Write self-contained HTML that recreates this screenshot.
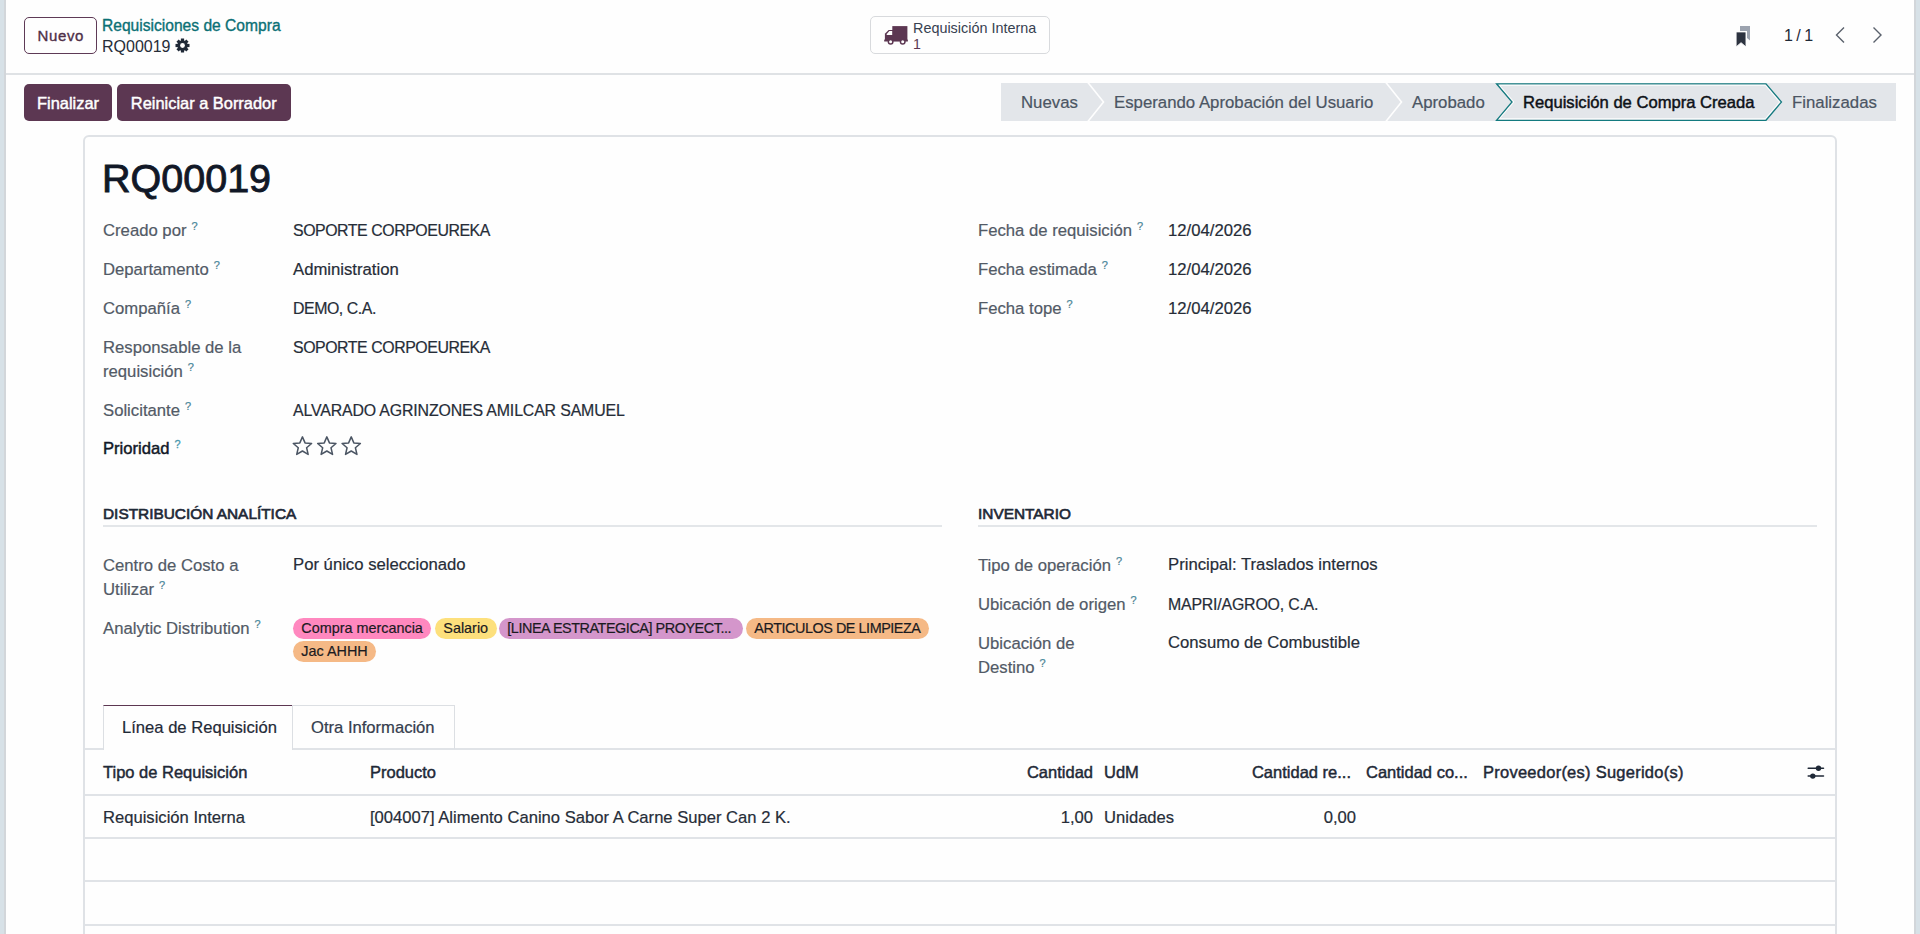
<!DOCTYPE html>
<html><head><meta charset="utf-8">
<style>
*{box-sizing:border-box;margin:0;padding:0}
html,body{width:1920px;height:934px;overflow:hidden;background:#fefefe;font-family:"Liberation Sans",sans-serif;color:#374151}
.a{position:absolute;white-space:nowrap}
#lbar{left:0;top:0;width:6px;height:934px;background:#d7e1e7;border-right:2px solid #d2d6da}
#rbar{left:1914px;top:0;width:6px;height:934px;background:#d7e1e7;border-left:2px solid #d2d6da}
#cpline{left:6px;top:72.5px;width:1908px;height:2px;background:#dfe2e5}
.btn-new{left:24px;top:16.5px;width:73px;height:37.5px;border:1.4px solid #5e3a56;border-radius:5px;color:#4f2f47;-webkit-text-stroke:0.35px #4f2f47;font-size:15px;letter-spacing:0.6px;text-indent:0.6px;line-height:36px;text-align:center}
.bc1{left:102px;top:16.6px;font-size:15.6px;line-height:18px;color:#0b7075;-webkit-text-stroke:0.35px #0b7075}
.bc2{left:102px;top:37.6px;font-size:16px;line-height:18px;color:#262d38}
.smart{left:870px;top:16px;width:180px;height:38px;border:1px solid #d8dadd;border-radius:5px}
.btnp{top:83.5px;height:37.5px;background:#5c3752;color:#fff;border-radius:5px;font-size:16.4px;-webkit-text-stroke:0.45px #fff;line-height:38px;text-align:center}
#sheet{left:83px;top:135px;width:1754px;height:830px;border:2px solid #dfe2e6;border-radius:6px;background:#fefefe}
.lbl{font-size:16.7px;line-height:24px;color:#525a66;-webkit-text-stroke:0.2px #525a66}
.val{font-size:16.7px;line-height:24px;color:#262d38;-webkit-text-stroke:0.2px #262d38}
.caps{font-size:15.9px;letter-spacing:-0.45px}
sup.q{color:#4895ab;font-size:11px;position:relative;top:0.6px;margin-left:5px;vertical-align:super;line-height:0}
.sec{font-size:15.4px;-webkit-text-stroke:0.65px #1f2937;line-height:20px;color:#1f2937}
.secline{height:2px;background:#e3e6e9}
.tag{position:absolute;height:20.6px;border-radius:10.5px;font-size:14.4px;line-height:20.6px;color:#1b1b1f;-webkit-text-stroke:0.2px #1b1b1f;padding:0 8.5px 0 8.8px;white-space:nowrap}
.tcaps{letter-spacing:-0.35px}
.st{font-size:16.8px;line-height:38px;color:#4b5563;-webkit-text-stroke:0.2px #4b5563}
.th{font-size:16.5px;-webkit-text-stroke:0.45px #1f2937;line-height:24px;color:#1f2937}
.td{font-size:16.6px;line-height:24px;color:#262d38;-webkit-text-stroke:0.2px #262d38}
.hline{left:85px;width:1750px;height:2px;background:#e0e3e7}
</style></head><body>
<div id="lbar" class="a"></div>
<div id="rbar" class="a"></div>
<div id="cpline" class="a"></div>

<!-- control panel -->
<div class="a btn-new">Nuevo</div>
<div class="a bc1">Requisiciones de Compra</div>
<div class="a bc2">RQ00019</div>
<svg class="a" style="left:175px;top:38px" width="15" height="15" viewBox="0 0 15 15">
 <g transform="translate(7.5 7.5)" fill="#1f2937">
  <circle r="5.2"/>
  <g id="tooth"><rect x="-1.6" y="-7" width="3.2" height="3"/></g>
  <use href="#tooth" transform="rotate(45)"/><use href="#tooth" transform="rotate(90)"/><use href="#tooth" transform="rotate(135)"/>
  <use href="#tooth" transform="rotate(180)"/><use href="#tooth" transform="rotate(225)"/><use href="#tooth" transform="rotate(270)"/><use href="#tooth" transform="rotate(315)"/>
  <circle r="2.4" fill="#fefefe"/>
 </g>
</svg>

<div class="a smart"></div>
<svg class="a" style="left:884px;top:25px" width="25" height="21" viewBox="0 0 25 21">
 <g fill="#5c3752">
  <rect x="8.3" y="1.1" width="15.1" height="15"/>
  <path d="M0.9 16 L0.9 8.8 L4.6 4.9 L9 4.9 L9 16 Z"/>
  <rect x="0.2" y="14.6" width="23.6" height="1.9"/>
  <circle cx="6.6" cy="16.8" r="3"/><circle cx="18.7" cy="16.8" r="3"/>
 </g>
 <path d="M2.7 9.9 L2.7 8.9 L5.4 5.9 L8.2 5.9 L8.2 9.9 Z" fill="#fefefe"/>
 <circle cx="6.6" cy="16.8" r="1.5" fill="#fefefe"/><circle cx="18.7" cy="16.8" r="1.5" fill="#fefefe"/>
</svg>
<div class="a" style="left:913px;top:20px;font-size:14.4px;line-height:16px;color:#374151">Requisición Interna</div>
<div class="a" style="left:913px;top:36px;font-size:14.2px;line-height:16px;color:#5c3752">1</div>

<svg class="a" style="left:1734px;top:24px" width="18" height="25" viewBox="0 0 18 25">
 <path d="M6 2 L16 2 L16 16.5 L13 14 L13 7 L6 7 Z" fill="#9ca3af"/>
 <path d="M2.1 7.9 L12 7.9 L12 22.9 L7.05 18.7 L2.1 22.9 Z" fill="#2d3340" stroke="#fefefe" stroke-width="0.9"/>
</svg>
<div class="a" style="left:1784px;top:26.6px;font-size:16px;line-height:18px;color:#1f2937">1<span style="margin:0 -1px 0 -1px"> / </span>1</div>
<svg class="a" style="left:1832px;top:26px" width="54" height="18" viewBox="0 0 54 18">
 <path d="M12 1.5 L4.5 9 L12 16.5" fill="none" stroke="#5a616c" stroke-width="1.4"/>
 <path d="M41.5 1.5 L49 9 L41.5 16.5" fill="none" stroke="#5a616c" stroke-width="1.4"/>
</svg>

<!-- action buttons -->
<div class="a btnp" style="left:24px;width:88px">Finalizar</div>
<div class="a btnp" style="left:116.5px;width:174.5px">Reiniciar a Borrador</div>

<!-- status bar -->
<svg class="a" style="left:1001px;top:83px" width="895" height="38" viewBox="0 0 895 38">
 <rect x="0" y="0" width="895" height="38" fill="#e3e6ea"/>
 <path d="M86.5 -1 L102.5 19 L86.5 39" fill="none" stroke="#fefefe" stroke-width="1.6"/>
 <path d="M384.5 -1 L400.5 19 L384.5 39" fill="none" stroke="#fefefe" stroke-width="1.6"/>
 <path d="M495.5 0.75 L765 0.75 L780.5 19 L765 37.25 L495.5 37.25 L511 19 Z" fill="#e3e6ea" stroke="#137a7f" stroke-width="1.25"/>
 <path d="M498.5 2.25 L764.3 2.25 L778.5 19 L764.3 35.75 L498.5 35.75 L513 19 Z" fill="none" stroke="#fefefe" stroke-width="1"/>
</svg>
<div class="a st" style="left:1021px;top:84px">Nuevas</div>
<div class="a st" style="left:1114px;top:84px">Esperando Aprobación del Usuario</div>
<div class="a st" style="left:1412px;top:84px">Aprobado</div>
<div class="a st" style="left:1523px;top:84px;color:#0d1117;font-size:16.6px;-webkit-text-stroke:0.45px #0d1117">Requisición de Compra Creada</div>
<div class="a st" style="left:1792px;top:84px">Finalizadas</div>

<!-- sheet -->
<div id="sheet" class="a"></div>
<div class="a" style="left:102px;top:155px;font-size:39.5px;line-height:46px;color:#111827;-webkit-text-stroke:0.9px #111827">RQ00019</div>

<div class="a lbl" style="left:103px;top:219px">Creado por<sup class="q">?</sup></div>
<div class="a val caps" style="left:293px;top:219px">SOPORTE CORPOEUREKA</div>
<div class="a lbl" style="left:103px;top:258px">Departamento<sup class="q">?</sup></div>
<div class="a val" style="left:293px;top:258px">Administration</div>
<div class="a lbl" style="left:103px;top:297px">Compañía<sup class="q">?</sup></div>
<div class="a val caps" style="left:293px;top:297px">DEMO, C.A.</div>
<div class="a lbl" style="left:103px;top:336px">Responsable de la</div>
<div class="a lbl" style="left:103px;top:360px">requisición<sup class="q">?</sup></div>
<div class="a val caps" style="left:293px;top:336px">SOPORTE CORPOEUREKA</div>
<div class="a lbl" style="left:103px;top:399px">Solicitante<sup class="q">?</sup></div>
<div class="a val caps" style="left:293px;top:399px;letter-spacing:-0.15px">ALVARADO AGRINZONES AMILCAR SAMUEL</div>
<div class="a lbl" style="left:103px;top:437px;color:#111827;font-size:16.6px;-webkit-text-stroke:0.45px #111827">Prioridad<sup class="q" style="-webkit-text-stroke:0.3px #4a9ab0">?</sup></div>
<svg class="a" style="left:291px;top:435px" width="74" height="22" viewBox="0 0 74 22">
 <g fill="none" stroke="#4b5563" stroke-width="1.45" stroke-linejoin="round" transform="scale(1.04)">
  <path id="star" d="M11 1.8 L13.5 7.6 L19.8 8.2 L15 12.3 L16.5 18.7 L11 15.4 L5.5 18.7 L7 12.3 L2.2 8.2 L8.5 7.6 Z"/>
  <use href="#star" transform="translate(23.46 0)"/>
  <use href="#star" transform="translate(46.92 0)"/>
 </g>
</svg>

<div class="a lbl" style="left:978px;top:219px">Fecha de requisición<sup class="q">?</sup></div>
<div class="a val" style="left:1168px;top:219px">12/04/2026</div>
<div class="a lbl" style="left:978px;top:258px">Fecha estimada<sup class="q">?</sup></div>
<div class="a val" style="left:1168px;top:258px">12/04/2026</div>
<div class="a lbl" style="left:978px;top:297px">Fecha tope<sup class="q">?</sup></div>
<div class="a val" style="left:1168px;top:297px">12/04/2026</div>

<!-- section analytic -->
<div class="a sec" style="left:103px;top:504px">DISTRIBUCIÓN ANALÍTICA</div>
<div class="a secline" style="left:103px;top:525px;width:839px"></div>
<div class="a lbl" style="left:103px;top:554px">Centro de Costo a</div>
<div class="a lbl" style="left:103px;top:578px">Utilizar<sup class="q">?</sup></div>
<div class="a val" style="left:293px;top:553px">Por único seleccionado</div>
<div class="a lbl" style="left:103px;top:617px">Analytic Distribution<sup class="q">?</sup></div>
<div class="tag" style="left:292.5px;top:618.3px;background:#ff88bf">Compra mercancia</div>
<div class="tag" style="left:434.5px;top:618.3px;background:#fde07c">Salario</div>
<div class="tag" style="left:498.5px;top:618.3px;background:#d496cb;width:244px;letter-spacing:-0.45px">[LINEA ESTRATEGICA] PROYECT...</div>
<div class="tag" style="left:745.5px;top:618.3px;background:#f5b986;letter-spacing:-0.45px">ARTICULOS DE LIMPIEZA</div>
<div class="tag" style="left:292.5px;top:641.2px;background:#f5b986">Jac AHHH</div>

<!-- section inventory -->
<div class="a sec" style="left:978px;top:504px">INVENTARIO</div>
<div class="a secline" style="left:978px;top:525px;width:839px"></div>
<div class="a lbl" style="left:978px;top:554px">Tipo de operación<sup class="q">?</sup></div>
<div class="a val" style="left:1168px;top:553px">Principal: Traslados internos</div>
<div class="a lbl" style="left:978px;top:593px">Ubicación de origen<sup class="q">?</sup></div>
<div class="a val caps" style="left:1168px;top:593px;letter-spacing:-0.2px">MAPRI/AGROO, C.A.</div>
<div class="a lbl" style="left:978px;top:632px">Ubicación de</div>
<div class="a lbl" style="left:978px;top:656px">Destino<sup class="q">?</sup></div>
<div class="a val" style="left:1168px;top:631px">Consumo de Combustible</div>

<!-- notebook -->
<div class="a hline" style="top:748px"></div>
<div class="a" style="left:103px;top:705px;width:190px;height:45px;border:1px solid #dcdfe3;border-top:1px solid #5c3752;border-bottom:none;background:#fefefe"></div>
<div class="a" style="left:292px;top:705px;width:163px;height:44px;border:1px solid #dcdfe3;border-bottom:none"></div>
<div class="a td" style="left:122px;top:716px;color:#1f2937">Línea de Requisición</div>
<div class="a td" style="left:311px;top:716px;color:#374151">Otra Información</div>

<!-- table -->
<div class="a th" style="left:103px;top:759.5px">Tipo de Requisición</div>
<div class="a th" style="left:370px;top:759.5px">Producto</div>
<div class="a th" style="left:1000px;top:759.5px;width:93px;text-align:right">Cantidad</div>
<div class="a th" style="left:1104px;top:759.5px">UdM</div>
<div class="a th" style="left:1240px;top:759.5px;width:111px;text-align:right">Cantidad re...</div>
<div class="a th" style="left:1366px;top:759.5px">Cantidad co...</div>
<div class="a th" style="left:1483px;top:759.5px;letter-spacing:0.25px">Proveedor(es) Sugerido(s)</div>
<svg class="a" style="left:1806px;top:764px" width="19" height="16" viewBox="0 0 19 16">
 <g stroke="#1f2937" stroke-width="1.5" stroke-linecap="round"><path d="M2.2 4.2 H17.5"/><path d="M2.2 12.1 H17.5"/></g>
 <g fill="#1f2937"><circle cx="12.5" cy="4.2" r="2.7"/><circle cx="6.8" cy="12.1" r="2.7"/></g>
</svg>
<div class="a hline" style="top:794px"></div>
<div class="a td" style="left:103px;top:806px">Requisición Interna</div>
<div class="a td" style="left:370px;top:806px">[004007] Alimento Canino Sabor A Carne Super Can 2 K.</div>
<div class="a td" style="left:1000px;top:806px;width:93px;text-align:right">1,00</div>
<div class="a td" style="left:1104px;top:806px">Unidades</div>
<div class="a td" style="left:1240px;top:806px;width:116px;text-align:right">0,00</div>
<div class="a hline" style="top:837px"></div>
<div class="a hline" style="top:880px"></div>
<div class="a hline" style="top:924px"></div>
</body></html>
